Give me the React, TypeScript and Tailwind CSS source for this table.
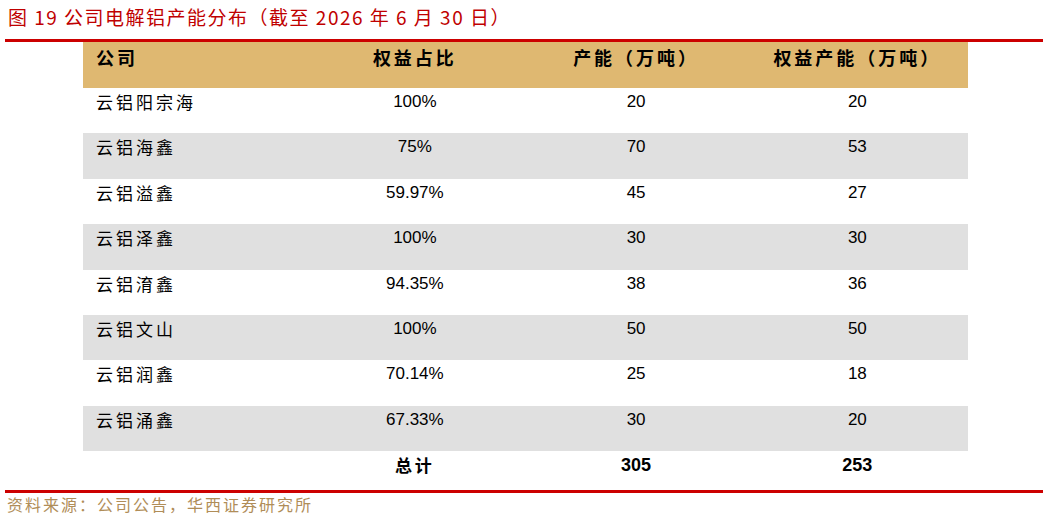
import React from 'react';

interface Row {
  name: string;
  share: string;
  capacity: string;
  equity: string;
}

const rows: Row[] = [
  { name: '云铝阳宗海', share: '100%', capacity: '20', equity: '20' },
  { name: '云铝海鑫', share: '75%', capacity: '70', equity: '53' },
  { name: '云铝溢鑫', share: '59.97%', capacity: '45', equity: '27' },
  { name: '云铝泽鑫', share: '100%', capacity: '30', equity: '30' },
  { name: '云铝淯鑫', share: '94.35%', capacity: '38', equity: '36' },
  { name: '云铝文山', share: '100%', capacity: '50', equity: '50' },
  { name: '云铝润鑫', share: '70.14%', capacity: '25', equity: '18' },
  { name: '云铝涌鑫', share: '67.33%', capacity: '30', equity: '20' },
];

const cjk = "font-['Noto_Sans_CJK_SC',sans-serif]";
const num = "font-['Liberation_Sans','Noto_Sans_CJK_SC',sans-serif]";

export default function App() {
  return (
    <div className="w-[1053px] h-[517px] bg-white overflow-hidden">
      {/* Title */}
      <div
        className={`h-[39px] pl-[8px] pt-[4px] text-[19px] leading-[26px] tracking-[1.5px] text-[#c00000] ${cjk}`}
      >
        图 19 公司电解铝产能分布（截至 2026 年 6 月 30 日）
      </div>
      <div className="mx-[5px] w-[1038px] h-[3px] bg-[#cc0000]" />

      {/* Table */}
      <div className="ml-[83px] w-[885px]">
        <div className="grid grid-cols-4 h-[46px] bg-[#dfb871] text-black font-bold">
          <div className={`pl-[13px] pt-[3px] text-[18px] leading-[24px] tracking-[3px] ${cjk}`}>公司</div>
          <div className={`text-center pt-[3px] text-[18px] leading-[24px] tracking-[3px] ${cjk}`}>权益占比</div>
          <div className={`text-center pt-[3px] text-[18px] leading-[24px] tracking-[3px] ${cjk}`}>产能（万吨）</div>
          <div className={`text-center pt-[3px] text-[18px] leading-[24px] tracking-[3px] ${cjk}`}>权益产能（万吨）</div>
        </div>

        {rows.map((r, i) => (
          <div
            key={r.name}
            className={`grid grid-cols-4 h-[45.4px] text-black ${i % 2 === 1 ? 'bg-[#e0e0e0]' : 'bg-white'}`}
          >
            <div className={`pl-[13px] pt-[2px] text-[17px] leading-[24px] tracking-[3px] ${cjk}`}>{r.name}</div>
            <div className={`text-center pt-[2px] text-[17px] leading-[24px] ${num}`}>{r.share}</div>
            <div className={`text-center pt-[2px] text-[17px] leading-[24px] ${num}`}>{r.capacity}</div>
            <div className={`text-center pt-[2px] text-[17px] leading-[24px] ${num}`}>{r.equity}</div>
          </div>
        ))}

        <div className="grid grid-cols-4 h-[38.8px] text-black font-bold">
          <div />
          <div className={`text-center pt-[2px] text-[17px] leading-[24px] tracking-[3px] ${cjk}`}>总计</div>
          <div className={`text-center pt-[2px] text-[18px] leading-[24px] ${num}`}>305</div>
          <div className={`text-center pt-[2px] text-[18px] leading-[24px] ${num}`}>253</div>
        </div>
      </div>

      <div className="mx-[5px] w-[1038px] h-[3px] bg-[#cc0000]" />

      {/* Source */}
      <div className={`pl-[7px] pt-[1px] text-[16px] leading-[20px] tracking-[2px] text-[#b08d58] ${cjk}`}>
        资料来源：公司公告，华西证券研究所
      </div>
    </div>
  );
}
